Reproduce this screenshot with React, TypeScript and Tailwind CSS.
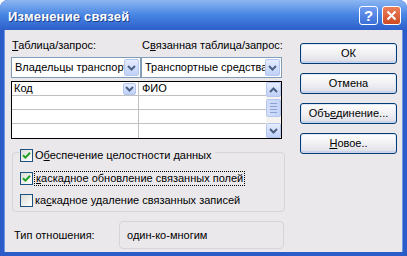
import React from "react";

const bodyBg = "bg-[#ebe8ec]";

function Chevron({ up = false }: { up?: boolean }) {
  return (
    <svg width="9" height="6" viewBox="0 0 9 6" className={up ? "rotate-180" : ""}>
      <path d="M1 1 L4.5 4.5 L8 1" fill="none" stroke="#4d6185" strokeWidth="2" />
    </svg>
  );
}

function DropBtn({ className = "" }: { className?: string }) {
  return (
    <div
      className={`flex shrink-0 items-center justify-center rounded-[2px] border border-[#b5c7ef] bg-linear-to-b from-[#e6edff] to-[#bfd0f8] ${className}`}
    >
      <Chevron />
    </div>
  );
}

function Combo({ text, width }: { text: string; width: string }) {
  return (
    <div className={`flex h-[21px] ${width} items-center border border-[#7f9db9] bg-white pr-px pl-[3px]`}>
      <span className="flex-1 overflow-hidden whitespace-nowrap">{text}</span>
      <DropBtn className="h-[17px] w-[15px]" />
    </div>
  );
}

function CheckBox({ checked }: { checked: boolean }) {
  return (
    <div className="flex h-[13px] w-[13px] shrink-0 items-center justify-center border border-[#1c5180] bg-linear-to-br from-[#dcdcd7] to-white">
      {checked && (
        <svg width="9" height="9" viewBox="0 0 9 9">
          <path d="M1 4.2 L3.4 6.6 L8 1.8" fill="none" stroke="#21a121" strokeWidth="2" />
        </svg>
      )}
    </div>
  );
}

function XpButton({ children }: { children: React.ReactNode }) {
  return (
    <div className="flex h-[21px] w-[97px] items-center justify-center rounded-[3px] border border-[#003c74] bg-linear-to-b from-white via-[#f1f1f4] to-[#dcdce6] shadow-[inset_0_-2px_0_#c9d4ec,inset_0_0_0_1px_#dfe8fb]">
      {children}
    </div>
  );
}

export default function App() {
  return (
    <div className="flex h-[256px] w-[407px] flex-col overflow-hidden rounded-t-[8px] bg-[#2b5cc7] font-['Liberation_Sans',Arial,sans-serif] text-[11px] leading-[13px] text-black">
      {/* title bar */}
      <div className="flex h-[30px] shrink-0 items-center bg-linear-to-b from-[#8db6f2] via-[#4784e2] to-[#2e5fcb] pr-[6px] pl-[8px]">
        <span className="flex-1 pt-[3px] text-[13px] font-bold tracking-[0.2px] text-white [text-shadow:1px_1px_0_#1a3f8f]">
          Изменение связей
        </span>
        <div className="flex gap-[4px] pt-[1px]">
          <div className="flex h-[19px] w-[19px] items-center justify-center rounded-[3px] border border-white bg-linear-to-b from-[#6f9cf0] to-[#3c6fd8] text-[15px] font-bold text-white">
            ?
          </div>
          <div className="flex h-[19px] w-[19px] items-center justify-center rounded-[3px] border border-white bg-linear-to-b from-[#ec7f5a] to-[#cc4a24]">
            <svg width="11" height="11" viewBox="0 0 11 11">
              <path d="M1.5 1.5 L9.5 9.5 M9.5 1.5 L1.5 9.5" stroke="white" strokeWidth="2" />
            </svg>
          </div>
        </div>
      </div>

      {/* body */}
      <div className={`mx-[4px] mb-[4px] flex flex-1 border-x border-[#6a98e6] ${bodyBg}`}>
        {/* left column */}
        <div className="flex w-[280px] flex-col pt-[9px] pl-[6px]">
          <div className="flex h-[13px]">
            <span className="w-[131px] pl-px">
              <u>Т</u>аблица/запрос:
            </span>
            <span>
              С<u>в</u>язанная таблица/запрос:
            </span>
          </div>

          <div className="mt-[5px] flex">
            <Combo text="Владельцы транспортных средств" width="w-[130px]" />
            <Combo text="Транспортные средства" width="w-[141px]" />
          </div>

          {/* grid */}
          <div className="mt-[3px] flex h-[58px] w-[271px] border border-black bg-white">
            <div className="flex flex-1 flex-col">
              {[0, 1, 2, 3].map((r) => (
                <div key={r} className={`flex h-[14px] ${r < 3 ? "border-b border-[#c0c0c0]" : ""}`}>
                  <div className="flex w-[127px] items-center border-r border-[#c0c0c0] pr-[2px] pl-[2px]">
                    {r === 0 && (
                      <>
                        <span className="flex-1">Код</span>
                        <DropBtn className="h-[12px] w-[13px]" />
                      </>
                    )}
                  </div>
                  <div className="flex flex-1 items-center pl-[3px]">{r === 0 && "ФИО"}</div>
                </div>
              ))}
            </div>
            {/* scrollbar */}
            <div className="flex w-[15px] flex-col bg-[#f4f3f0]">
              <DropBtn className="h-[15px] w-[15px] [&_svg]:rotate-180" />
              <div className="mt-[2px] flex h-[18px] w-[15px] flex-col items-center justify-center gap-[2px] rounded-[2px] border border-[#b5c7ef] bg-linear-to-r from-[#d2defa] to-[#c4d4f8]">
                <div className="h-px w-[7px] bg-[#8aa3d6]" />
                <div className="h-px w-[7px] bg-[#8aa3d6]" />
                <div className="h-px w-[7px] bg-[#8aa3d6]" />
                <div className="h-px w-[7px] bg-[#8aa3d6]" />
              </div>
              <div className="flex-1" />
              <DropBtn className="h-[15px] w-[15px]" />
            </div>
          </div>

          {/* group box */}
          <div className="mt-[13px] ml-px h-[60px] w-[273px] rounded-[4px] border border-[#d6d3d9] px-[6px]">
            <div className={`-mt-[4px] flex h-[13px] w-fit items-center gap-[2px] pr-[4px] pl-px ${bodyBg}`}>
              <CheckBox checked />
              <span>
                О<u>б</u>еспечение целостности данных
              </span>
            </div>
            <div className="mt-[10px] flex h-[13px] items-center gap-[1px] pl-px">
              <CheckBox checked />
              <span className="border border-dotted border-black px-px">
                <u>к</u>аскадное обновление связанных полей
              </span>
            </div>
            <div className="mt-[9px] flex h-[13px] items-center gap-[2px] pl-px">
              <CheckBox checked={false} />
              <span>
                ка<u>с</u>кадное удаление связанных записей
              </span>
            </div>
          </div>

          {/* relation type */}
          <div className="mt-[9px] flex items-center">
            <span className="w-[108px] pl-[3px]">Тип отношения:</span>
            <div className="flex h-[28px] w-[165px] items-center rounded-[4px] border border-[#d6d3d9] pl-[7px]">
              один-ко-многим
            </div>
          </div>
        </div>

        {/* right column */}
        <div className="ml-auto flex flex-col gap-[9px] pt-[13px] pr-[5px]">
          <XpButton>ОК</XpButton>
          <XpButton>Отмена</XpButton>
          <XpButton>
            <span>
              Объ<u>е</u>динение...
            </span>
          </XpButton>
          <XpButton>
            <span>
              <u>Н</u>овое..
            </span>
          </XpButton>
        </div>
      </div>
    </div>
  );
}
